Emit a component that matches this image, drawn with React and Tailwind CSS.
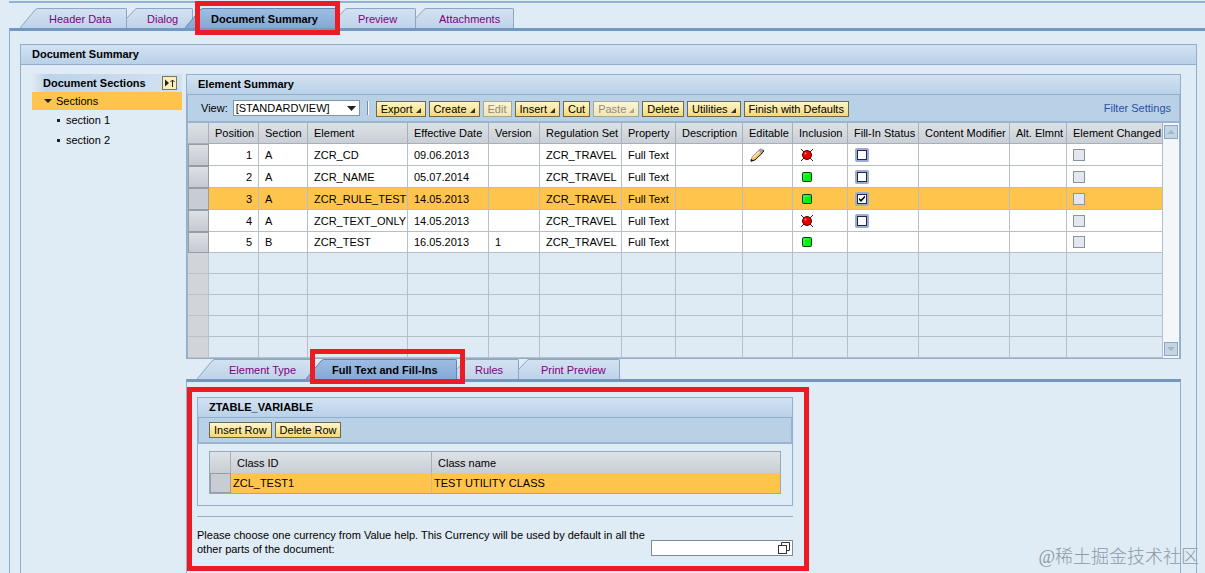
import { useState } from "react";
import clsx from "clsx";

const COLUMNS = [
  { key: "position", label: "Position", width: "w-[50px]" },
  { key: "section", label: "Section", width: "w-[49px]" },
  { key: "element", label: "Element", width: "w-[100px]" },
  { key: "date", label: "Effective Date", width: "w-[81px]" },
  { key: "version", label: "Version", width: "w-[51px]" },
  { key: "regulation", label: "Regulation Set", width: "w-[82px]" },
  { key: "property", label: "Property", width: "w-[54px]" },
  { key: "description", label: "Description", width: "w-[67px]" },
  { key: "editable", label: "Editable", width: "w-[50px]" },
  { key: "inclusion", label: "Inclusion", width: "w-[55px]" },
  { key: "fillIn", label: "Fill-In Status", width: "w-[71px]" },
  { key: "modifier", label: "Content Modifier", width: "w-[91px]" },
  { key: "alt", label: "Alt. Elmnt", width: "w-[57px]" },
  { key: "changed", label: "Element Changed", width: "w-[96px]" },
];

const ROWS = [
  { position: 1, section: "A", element: "ZCR_CD", date: "09.06.2013", editable: true, included: false, fillIn: false },
  { position: 2, section: "A", element: "ZCR_NAME", date: "05.07.2014", included: true, fillIn: false },
  { position: 3, section: "A", element: "ZCR_RULE_TEST", date: "14.05.2013", included: true, fillIn: true },
  { position: 4, section: "A", element: "ZCR_TEXT_ONLY", date: "14.05.2013", included: false, fillIn: false },
  { position: 5, section: "B", element: "ZCR_TEST", date: "16.05.2013", version: "1", included: true },
];

const EMPTY_ROWS = [1, 2, 3, 4, 5];

function RedMark({ className }) {
  return <span className={clsx("pointer-events-none absolute z-20 border-[5px] border-[#ed1c24]", className)} />;
}

// Tab with a slanted left shoulder
function Tab({ label, first, active, className, textClass, mark }) {
  const slant = first || active;
  return (
    <button
      role="tab"
      aria-selected={!!active}
      className={clsx("relative flex h-5 shrink-0 cursor-pointer text-left", active && "z-10 font-bold", className)}
    >
      <svg className={clsx("h-5 shrink-0", slant ? "w-[18px]" : "w-[10px]")} viewBox={slant ? "0 0 18 20" : "0 0 10 20"}>
        <defs>
          <linearGradient id={active ? "tab-on" : "tab-off"} gradientUnits="userSpaceOnUse" x1="0" y1="1" x2="0" y2="20">
            <stop offset="0" stopColor={active ? "#9dbde2" : "#d3e2f1"} />
            <stop offset="1" stopColor={active ? "#84a9d5" : "#bfd3e9"} />
          </linearGradient>
        </defs>
        <path
          d={slant ? "M0 20L15 2Q16.500 .5 18 .5V20Z" : "M0 10L8 1.500Q9 .5 10 .5V20H0Z"}
          fill={active ? "url(#tab-on)" : "url(#tab-off)"}
        />
        <path
          d={slant ? "M0 20L15 2Q16.500 .5 18 .5" : "M0 10L8 1.500Q9 .5 10 .5"}
          fill="none"
          stroke={active ? "#5f86b3" : "#8ba6c3"}
        />
      </svg>
      <span
        className={clsx(
          "flex flex-1 items-center whitespace-nowrap rounded-tr-xs border-t border-r bg-linear-to-b",
          active
            ? "border-[#5f86b3] from-[#9dbde2] to-[#84a9d5] text-black"
            : "border-[#8ba6c3] from-[#d3e2f1] to-[#bfd3e9] text-[#800080]",
          textClass
        )}
      >
        {label}
      </span>
      {mark && <RedMark className={mark} />}
    </button>
  );
}

function PanelTitle({ children }) {
  return (
    <h2 className="h-5 border-b border-[#93aecb] bg-linear-to-b from-[#d3e2f1] to-[#b9d1e8] px-[11px] text-[11px] leading-[19px] font-bold">
      {children}
    </h2>
  );
}

function YellowButton({ label, menu, disabled }) {
  return (
    <button
      disabled={disabled}
      className={clsx(
        "flex h-4 shrink-0 items-center gap-[3px] border bg-linear-to-b px-1 leading-[14px] whitespace-nowrap",
        disabled
          ? "border-[#a5a894] from-[#fbf4d6] to-[#f3e6b2] text-[#8f8d78]"
          : "cursor-pointer border-[#6b6a50] from-[#fff5c8] to-[#f6d872] text-black"
      )}
    >
      {label}
      {menu && (
        <svg className="mt-1 h-[5px] w-[5px]" viewBox="0 0 5 5">
          <path d="M5 0V5H0Z" fill={disabled ? "#a9a78f" : "#333"} />
        </svg>
      )}
    </button>
  );
}

function PencilIcon() {
  return (
    <svg className="h-[14px] w-[14px]" viewBox="0 0 14 14">
      <path d="M.5 13.500L1.500 9.500L9 2L11 .5L13.500 1.500V4L5 12Z" fill="#f7bd62" />
      <path d="M8.500 2.500L11 .8L13.200 1.800V4L11 6Z" fill="#9aa3bd" />
      <path d="M3 9.500L9.500 3.500" stroke="#ffe8bd" strokeWidth="1.500" />
      <path d="M1.500 9.500L9 2L11 .7" fill="none" stroke="#777" strokeWidth=".7" />
      <path d="M1 13L5 12L13.300 4V2" fill="none" stroke="#111" />
      <path d="M.5 13.500L1 10.500L3.500 13Z" fill="#111" />
    </svg>
  );
}

function StatusIcon({ included }) {
  if (included) {
    return (
      <svg className="h-[14px] w-[14px]" viewBox="0 0 14 14">
        <rect x="2.500" y="2.500" width="9" height="9" rx="1" fill="#00f010" stroke="#053a05" />
        <path d="M4 9V4H9" fill="none" stroke="#5dff5d" />
      </svg>
    );
  }
  return (
    <svg className="h-[14px] w-[14px]" viewBox="0 0 14 14">
      <path d="M1 1L13 13M13 1L1 13" stroke="#222" />
      <circle cx="7" cy="7" r="4.500" fill="#e80000" stroke="#5a0000" />
      <circle cx="5.500" cy="5.500" r="1" fill="#ff9c8c" />
    </svg>
  );
}

function FillInBox({ row, checked, onChange }) {
  return (
    <span className="relative flex h-[14px] w-[14px]">
      <input
        type="checkbox"
        aria-label={`Fill-in status ${row}`}
        checked={checked}
        onChange={onChange}
        className="h-[14px] w-[14px] appearance-none rounded-xs border-2 border-[#9dabd0] bg-white outline -outline-offset-3 outline-[#1d2850]"
      />
      {checked && (
        <svg className="pointer-events-none absolute inset-0 h-[14px] w-[14px]" viewBox="0 0 14 14">
          <path d="M4 6V8L6 10L10 5.500V3.500L6 7.500Z" fill="#000" />
        </svg>
      )}
    </span>
  );
}

function ScrollArrow({ up }) {
  return (
    <button
      aria-label={up ? "Scroll up" : "Scroll down"}
      className="flex h-[14px] w-[14px] items-center justify-center border border-[#8ba6c3] bg-[#c3d6e8]"
    >
      <svg className="h-1 w-2" viewBox="0 0 8 4">
        <path d={up ? "M0 4L4 0L8 4Z" : "M0 0H8L4 4Z"} fill="#a9b3bd" />
      </svg>
    </button>
  );
}

function ElementTable() {
  const [selected, setSelected] = useState(3);
  const [fills, setFills] = useState({ 3: true });

  const renderCell = (row, key) => {
    switch (key) {
      case "regulation":
        return "ZCR_TRAVEL";
      case "property":
        return "Full Text";
      case "editable":
        return row.editable ? <PencilIcon /> : null;
      case "inclusion":
        return <StatusIcon included={row.included} />;
      case "fillIn":
        return row.fillIn === undefined ? null : (
          <FillInBox
            row={row.position}
            checked={!!fills[row.position]}
            onChange={() => setFills((prev) => ({ ...prev, [row.position]: !prev[row.position] }))}
          />
        );
      case "changed":
        return (
          <input
            type="checkbox"
            disabled
            aria-label={`Element changed ${row.position}`}
            className="block h-3 w-3 appearance-none border border-[#8b939c] bg-[#e2e8ee]"
          />
        );
      default:
        return row[key];
    }
  };

  return (
    <table className="w-full flex-1 table-fixed border-separate border-spacing-0">
      <thead>
        <tr className="h-[21px] bg-linear-to-b from-[#dde2e7] to-[#c9ced4]">
          <th className="w-[21px] border-r border-b border-[#a7b0ba]" />
          {COLUMNS.map((col) => (
            <th
              key={col.key}
              className={clsx(
                "border-r border-b border-[#a7b0ba] p-0 pl-1.5 text-left font-normal whitespace-nowrap",
                col.width
              )}
            >
              {col.label}
            </th>
          ))}
        </tr>
      </thead>
      <tbody>
        {ROWS.map((row) => (
          <tr
            key={row.position}
            onClick={() => setSelected(row.position)}
            className={clsx("h-[22px] last:h-[21px]", selected === row.position ? "bg-[#ffc44c]" : "bg-white")}
          >
            <td
              className={clsx(
                "border border-[#959da8] p-0",
                selected === row.position ? "bg-[#c8cdd4]" : "bg-linear-to-b from-[#dde1e6] to-[#c5cad1]"
              )}
            />
            {COLUMNS.map((col) => (
              <td
                key={col.key}
                className={clsx(
                  "border-r border-b border-[#b4bfca] p-0 whitespace-nowrap",
                  col.key === "position" ? "pr-1.5 text-right" : "pl-1.5",
                  (col.key === "inclusion" || col.key === "editable" || col.key === "fillIn") && "pl-[7px]"
                )}
              >
                {renderCell(row, col.key)}
              </td>
            ))}
          </tr>
        ))}
      </tbody>
      <tbody>
        {EMPTY_ROWS.map((n) => (
          <tr key={n} className="h-[21px] bg-[#dfebf4]">
            <td className="border-r border-b border-[#b9c2cc] bg-[#d1d4d9] p-0" />
            {COLUMNS.map((col) => (
              <td key={col.key} className="border-r border-b border-[#b4bfca] p-0" />
            ))}
          </tr>
        ))}
      </tbody>
    </table>
  );
}

function SectionTree() {
  return (
    <nav className="w-[150px] shrink-0">
      <div className="flex h-[18px] items-center justify-between bg-linear-to-r from-[#dfebf5] via-[#bdd3e8] via-10% to-[#d3e2f0] pr-[5px] pl-[11px] font-bold">
        Document Sections
        <button aria-label="Toggle sections" className="h-[14px] w-[15px] border border-[#77765c] bg-[#fbeebb]">
          <svg className="h-3 w-[13px]" viewBox="0 0 13 12">
            <path d="M2 2.500V9.500L6 6Z" fill="#222" />
            <path d="M9.500 10V3M7.500 5L9.500 3L11.500 5" fill="none" stroke="#222" />
          </svg>
        </button>
      </div>
      <a href="#sections" className="flex h-[18px] items-center gap-1 bg-[#ffc44c] pl-3">
        <svg className="h-1 w-2" viewBox="0 0 8 4">
          <path d="M0 0H8L4 4Z" fill="#222" />
        </svg>
        Sections
      </a>
      {["section 1", "section 2"].map((name) => (
        <a key={name} href="#section" className="flex h-5 items-center gap-[6px] pl-[25px]">
          <span className="h-[3px] w-[3px] bg-[#222]" />
          {name}
        </a>
      ))}
    </nav>
  );
}

function Toolbar() {
  return (
    <div className="flex h-7 items-center border border-b-2 border-t-0 border-[#9ab4cf] bg-[#b9d1e7] pr-2 pl-[13px]">
      <label htmlFor="view" className="mr-[5px]">
        View:
      </label>
      <span className="relative flex">
        <select id="view" className="h-4 w-[127px] appearance-none border border-[#7f93a8] bg-white pl-0.5 leading-[14px]">
          <option>[STANDARDVIEW]</option>
        </select>
        <svg className="pointer-events-none absolute top-1.5 right-1 h-[5px] w-[9px]" viewBox="0 0 9 5">
          <path d="M0 0H9L4.500 5Z" fill="#222" />
        </svg>
      </span>
      <span className="mx-[7px] h-[14px] w-0.5 border-l border-[#6f8fb0] bg-white" />
      <div className="flex gap-[3px] pt-px">
        <YellowButton label="Export" menu />
        <YellowButton label="Create" menu />
        <YellowButton label="Edit" disabled />
        <YellowButton label="Insert" menu />
        <YellowButton label="Cut" />
        <YellowButton label="Paste" menu disabled />
        <YellowButton label="Delete" />
        <YellowButton label="Utilities" menu />
        <YellowButton label="Finish with Defaults" />
      </div>
      <a href="#filter" className="ml-auto whitespace-nowrap text-[#2a4fa8]">
        Filter Settings
      </a>
    </div>
  );
}

function VariablePanel() {
  return (
    <section className="w-[622px] max-w-full border-[5px] border-[#ed1c24] p-[5px] pr-[11px] pb-[10px]">
      <div className="border border-[#93aecb]">
        <PanelTitle>ZTABLE_VARIABLE</PanelTitle>
        <div className="flex h-[26px] items-center gap-[3px] border-x border-b-2 border-[#9ab4cf] bg-[#b9d1e7] pl-[10px]">
          <YellowButton label="Insert Row" />
          <YellowButton label="Delete Row" />
        </div>
        <div className="px-[11px] pt-[7px] pb-[11px]">
          <table className="w-full table-fixed border-separate border-spacing-0 border border-[#9aa8b8]">
            <thead>
              <tr className="h-[21px] bg-linear-to-b from-[#dde2e7] to-[#c9ced4]">
                <th className="w-[21px] border-r border-[#a7b0ba]" />
                <th className="w-[201px] border-r border-[#a7b0ba] p-0 pl-1.5 text-left font-normal">Class ID</th>
                <th className="p-0 pl-1.5 text-left font-normal">Class name</th>
              </tr>
            </thead>
            <tbody>
              <tr className="h-5 bg-[#ffc44c]">
                <td className="border border-[#959da8] bg-[#c8cdd4] p-0" />
                <td className="border-r border-[#d9b676] p-0 pl-0.5">ZCL_TEST1</td>
                <td className="p-0 pl-0.5">TEST UTILITY CLASS</td>
              </tr>
            </tbody>
          </table>
        </div>
      </div>
      <div className="mt-[10px] flex items-end justify-between border-t border-[#93aecb] pt-[11px]">
        <label htmlFor="currency" className="w-[450px] leading-[14px]">
          Please choose one currency from Value help. This Currency will be used by default in all the other parts of
          the document:
        </label>
        <span className="flex h-4 w-[142px] items-center border border-[#7f8b98] bg-white pr-0.5">
          <input id="currency" className="h-3 min-w-0 flex-1 bg-transparent px-1 outline-none" />
          <button aria-label="Value help">
            <svg className="h-3 w-3" viewBox="0 0 12 12">
              <path d="M3.500 3V.5H11.500V8.500H9" fill="none" stroke="#333" />
              <rect x=".5" y="3.500" width="8" height="8" fill="#fff" stroke="#333" />
            </svg>
          </button>
        </span>
      </div>
    </section>
  );
}

export default function App() {
  return (
    <div className="relative flex min-h-screen flex-col overflow-hidden bg-[#dfebf5] pt-px pl-[9px] font-['Liberation_Sans',Arial,sans-serif] text-[11px] leading-[14px] text-black">
      <div className="h-0.5 bg-[#93b1d1]" />
      <div role="tablist" className="mt-[5px] flex pl-[11px]">
        <Tab first label="Header Data" className="w-[107px]" textClass="pl-[11px]" />
        <Tab label="Dialog" className="w-[66px]" textClass="pl-[10px]" />
        <Tab
          active
          label="Document Summary"
          className="-ml-2 w-[152px]"
          textClass="pl-2"
          mark="-top-[7px] left-[10px] h-[34px] w-[145px]"
        />
        <Tab label="Preview" className="w-[79px]" textClass="pl-[11px]" />
        <Tab label="Attachments" className="w-[98px]" textClass="pl-[13px]" />
      </div>
      <div className="flex flex-1 flex-col border-t-3 border-l border-t-[#7398c3] border-l-[#93aecb] pt-[13px] pr-2 pl-[10px]">
        <main className="flex flex-1 flex-col border border-b-0 border-[#93aecb]">
          <PanelTitle>Document Summary</PanelTitle>
          <div className="flex flex-1 gap-1 pt-[9px] pr-[15px] pl-[11px]">
            <SectionTree />
            <div className="flex min-w-0 flex-1 flex-col">
              <div className="border border-[#93aecb]">
                <PanelTitle>Element Summary</PanelTitle>
                <Toolbar />
                <div className="flex border-x border-[#9ab4cf]">
                  <ElementTable />
                  <div className="flex w-4 shrink-0 flex-col items-center justify-between bg-[#f3f7fa] py-0.5">
                    <ScrollArrow up />
                    <ScrollArrow />
                  </div>
                </div>
              </div>
              <div role="tablist" className="flex pl-[11px]">
                <Tab first label="Element Type" className="w-[117px]" textClass="pl-[14px]" />
                <Tab
                  active
                  label="Full Text and Fill-Ins"
                  className="-ml-2 w-[151px]"
                  textClass="pl-2"
                  mark="-top-[10px] left-1 h-[35px] w-[155px]"
                />
                <Tab label="Rules" className="w-[62px]" textClass="pl-2" />
                <Tab label="Print Preview" className="w-[101px]" textClass="pl-3" />
              </div>
              <div className="flex-1 border-x border-t-3 border-x-[#93aecb] border-t-[#7398bd] pt-[5px]">
                <VariablePanel />
              </div>
            </div>
          </div>
        </main>
      </div>
      <span className="pointer-events-none absolute right-1.5 bottom-1 font-['Liberation_Serif','Noto_Sans_CJK_SC',serif] text-[18px] leading-6 font-light text-[#8d99a5]">
        @稀土掘金技术社区
      </span>
    </div>
  );
}
